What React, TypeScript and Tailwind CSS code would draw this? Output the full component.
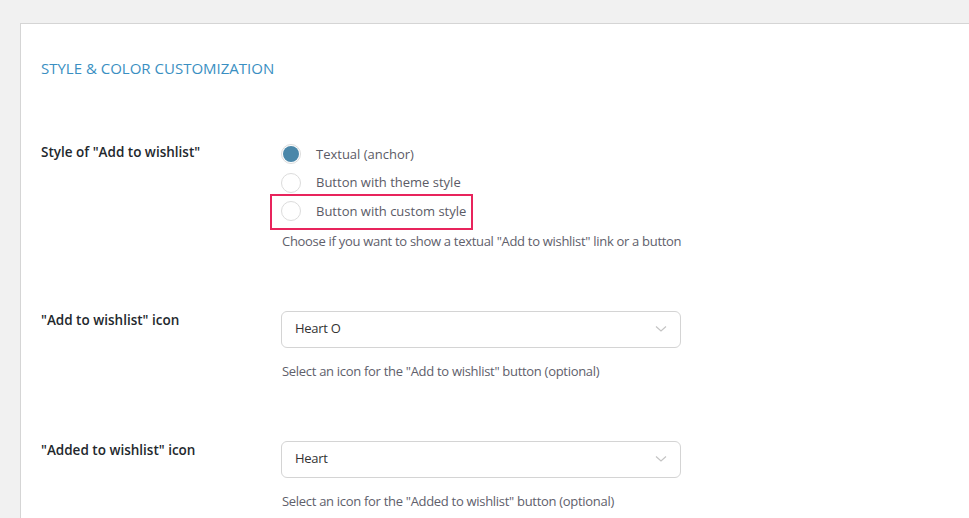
const options = [
  { label: "Textual (anchor)", checked: true },
  { label: "Button with theme style", checked: false },
  { label: "Button with custom style", checked: false, highlight: true },
];

const Radio = ({ checked }: { checked: boolean }) => (
  <span className="flex h-[20px] w-[20px] shrink-0 items-center justify-center rounded-full border border-[#dcdcdc] bg-white">
    {checked && <span className="h-[16px] w-[16px] rounded-full bg-[#4a87a9]" />}
  </span>
);

const Chevron = () => (
  <svg width="12" height="8" viewBox="0 0 12 8" fill="none">
    <polyline points="1,1.5 6,6 11,1.5" stroke="#c4c4c4" strokeWidth="1.2" />
  </svg>
);

const Select = ({ value }: { value: string }) => (
  <div className="flex h-[37px] w-[400px] items-center justify-between rounded-[6px] border border-[#d4d4d4] bg-white pl-[13px] pr-[13px] text-[13px] text-[#333]">
    <span>{value}</span>
    <Chevron />
  </div>
);

const Row = ({
  label,
  children,
  className,
}: {
  label: string;
  children: React.ReactNode;
  className?: string;
}) => (
  <div className={`flex items-start ${className ?? ""}`}>
    <div className="w-[240px] shrink-0 text-[13.5px] font-semibold leading-[20px] tracking-normal text-[#23282d]">
      {label}
    </div>
    <div>{children}</div>
  </div>
);

export default function App() {
  return (
    <div
      className="h-[518px] w-[969px] overflow-hidden bg-[#f1f1f1] pl-[20px] pt-[23px] tracking-[-0.3px]"
      style={{ fontFamily: '"Open Sans", "Noto Sans", sans-serif' }}
    >
      <div className="h-[600px] w-[1000px] border border-[#d5d5d5] bg-white pl-[20px] pt-[34px]">
        <h2 className="text-[15px] leading-[20px] tracking-normal text-[#3a8fc2]">
          STYLE &amp; COLOR CUSTOMIZATION
        </h2>

        <Row label={'Style of "Add to wishlist"'} className="mt-[64px]">
          <div className="-mt-[2px] flex flex-col items-start">
            {options.map((o) => (
              <div key={o.label} className="relative flex h-[28.5px] items-center gap-[15px]">
                {o.highlight && (
                  <span className="absolute -left-[11px] -right-[7px] -top-[3px] -bottom-[4px] border-2 border-[#e8245c]" />
                )}
                <Radio checked={o.checked} />
                <span className="text-[13px] tracking-normal text-[#5b5b66]">{o.label}</span>
              </div>
            ))}
          </div>
          <p className="mt-[5px] pl-[1px] text-[13px] leading-[20px] text-[#60606b]">
            Choose if you want to show a textual "Add to wishlist" link or a button
          </p>
        </Row>

        <Row label={'"Add to wishlist" icon'} className="mt-[59px]">
          <div className="mt-[1px]">
            <Select value="Heart O" />
          </div>
          <p className="mt-[13px] pl-[1px] text-[13px] leading-[20px] text-[#60606b]">
            Select an icon for the "Add to wishlist" button (optional)
          </p>
        </Row>

        <Row label={'"Added to wishlist" icon'} className="mt-[59px]">
          <div className="mt-[1px]">
            <Select value="Heart" />
          </div>
          <p className="mt-[13px] pl-[1px] text-[13px] leading-[20px] text-[#60606b]">
            Select an icon for the "Added to wishlist" button (optional)
          </p>
        </Row>
      </div>
    </div>
  );
}
